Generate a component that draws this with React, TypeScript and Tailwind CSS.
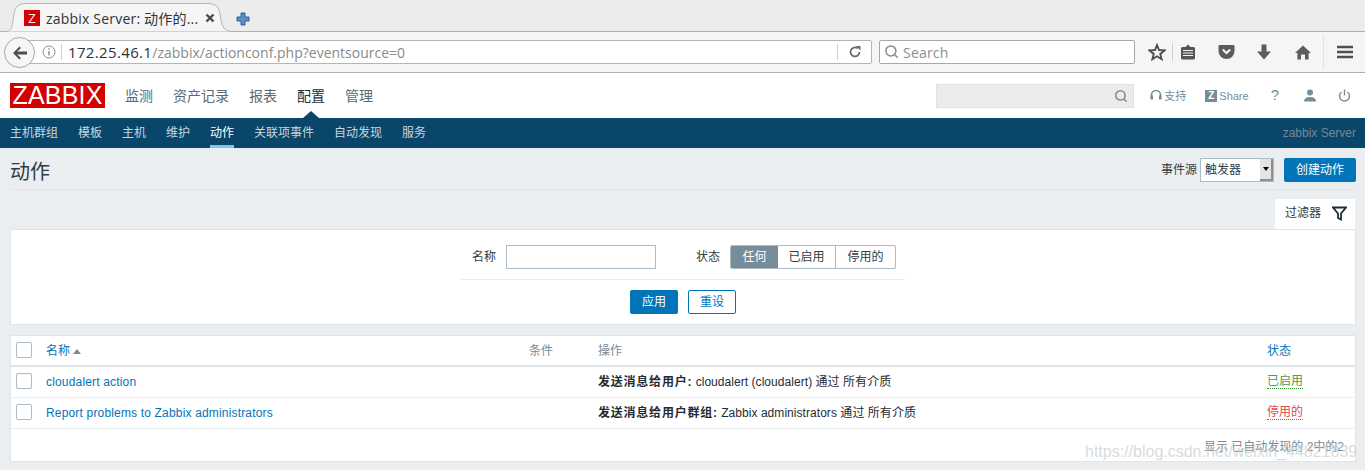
import { Search } from "lucide-react";

const uiFont = "font-['Liberation_Sans','Noto_Sans_CJK_SC',sans-serif]";
const chromeFont = "font-['Open_Sans','Noto_Sans_CJK_SC',sans-serif]";

const topMenu = ["监测", "资产记录", "报表", "配置", "管理"];
const subMenu = ["主机群组", "模板", "主机", "维护", "动作", "关联项事件", "自动发现", "服务"];

const actionRows = [
  {
    name: "cloudalert action",
    label: "发送消息给用户:",
    target: " cloudalert (cloudalert) 通过 所有介质",
    status: "已启用",
    statusClass: "text-[#4f9c4f] border-[#2f8f2f]",
  },
  {
    name: "Report problems to Zabbix administrators",
    label: "发送消息给用户群组:",
    target: " Zabbix administrators 通过 所有介质",
    status: "停用的",
    statusClass: "text-[#e0484d] border-[#e33734]",
  },
];

const TabStrip = () => {
  return (
    <div className={`relative h-[32px] bg-[#ececec] border-b border-[#b0b0b0] ${chromeFont}`}>
      <svg className="absolute left-0 top-0" width="240" height="32" viewBox="0 0 240 32">
        <path
          d="M0 31.5 H4 C12 31.5 12 28 14 14 C15 7 18 3.5 26 3.5 H208 C216 3.5 219 7 220 14 C222 28 224 31.5 234 31.5"
          fill="#f5f5f5"
          stroke="#b4b4b4"
        />
      </svg>
      <div className="absolute left-[24px] top-[10px] w-[16px] h-[16px] bg-[#d40000] flex items-center justify-center text-white text-[13px] leading-none">
        Z
      </div>
      <span className="absolute left-[46px] top-[9px] text-[14px] leading-[20px] text-[#2e3436] whitespace-nowrap tracking-[0.2px]">
        zabbix Server: 动作的...
      </span>
      <svg className="absolute left-[205px] top-[13px]" width="10" height="10" viewBox="0 0 10 10">
        <path d="M1.5 1.5 L8.5 8.5 M8.5 1.5 L1.5 8.5" stroke="#4a4a4a" strokeWidth="2.4" />
      </svg>
      <svg className="absolute left-[236px] top-[12px]" width="14" height="14" viewBox="0 0 14 14">
        <path d="M5 1 H9 V5 H13 V9 H9 V13 H5 V9 H1 V5 H5 Z" fill="#5b8fc7" stroke="#2f5f9c" />
      </svg>
    </div>
  );
};

const Toolbar = () => {
  return (
    <div className={`relative h-[41px] bg-[#f5f5f5] border-b border-[#b0b0b0] flex items-center ${chromeFont}`}>
      <div className="ml-[19px] mt-[-1px] flex-1 h-[24px] bg-white border border-[#b5b5b5] rounded-r-[2px] flex items-center pl-[22px] pr-[9px] min-w-0">
        <svg width="14" height="14" viewBox="0 0 14 14" className="shrink-0">
          <circle cx="7" cy="7" r="6" fill="none" stroke="#8c8c8c" />
          <path d="M7 6 V10.5 M7 3.2 V4.8" stroke="#8c8c8c" strokeWidth="1.4" />
        </svg>
        <div className="w-px h-[16px] bg-[#d0d0d0] ml-[5px] mr-[6px]" />
        <span className="text-[15px] text-[#2e3436] whitespace-nowrap tracking-[0.35px] pt-[1px]">
          172.25.46.1
          <span className="text-[14px] tracking-normal text-[#8a8a8a]">/zabbix/actionconf.php?eventsource=0</span>
        </span>
        <div className="ml-auto flex items-center">
          <div className="w-px h-[16px] bg-[#d0d0d0] mr-[10px]" />
          <svg width="14" height="14" viewBox="0 0 14 14">
            <path d="M11.5 7 A4.5 4.5 0 1 1 9.8 3.4" fill="none" stroke="#6a6a6a" strokeWidth="1.8" />
            <path d="M8 1 H12.5 V5.5 Z" fill="#6a6a6a" />
          </svg>
        </div>
      </div>
      <div className="ml-[7px] mt-[-1px] w-[256px] h-[24px] bg-white border border-[#a8a8a8] rounded-[2px] flex items-center pl-[4px] shrink-0">
        <Search size={15} strokeWidth={2.4} className="text-[#8a8a8a]" />
        <span className="ml-[4px] pt-[1px] text-[14px] text-[#8f8f8f] tracking-[0.2px]">Search</span>
      </div>
      <div className="w-[230px] shrink-0 flex items-center h-full">
        <svg className="ml-[13px]" width="18" height="18" viewBox="0 0 18 18">
          <path d="M9 2 L11 7 L16.5 7.4 L12.3 10.9 L13.6 16.2 L9 13.3 L4.4 16.2 L5.7 10.9 L1.5 7.4 L7 7 Z" fill="none" stroke="#4f4f4f" strokeWidth="1.9" />
        </svg>
        <div className="w-px h-[18px] bg-[#d0d0d0] ml-[6px] mr-[8px]" />
        <svg width="14" height="16" viewBox="0 0 14 16">
          <path d="M1.5 3 H4.5 L7 0.5 L9.5 3 H12.5 Q14 3 14 4.5 V14 Q14 15.5 12.5 15.5 H1.5 Q0 15.5 0 14 V4.5 Q0 3 1.5 3 Z" fill="#555" />
          <path d="M2 6.5 H12 M2 9 H12 M2 11.5 H12" stroke="#f5f5f5" />
        </svg>
        <svg className="ml-[23px]" width="17" height="16" viewBox="0 0 17 16">
          <path d="M1.5 1 H15.5 Q16.5 1 16.5 2 V7 A8 8 0 0 1 0.5 7 V2 Q0.5 1 1.5 1 Z" fill="#5c5c5c" />
          <path d="M4.8 5.5 L8.5 9 L12.2 5.5" fill="none" stroke="#f5f5f5" strokeWidth="2" />
        </svg>
        <svg className="ml-[22px]" width="14" height="16" viewBox="0 0 14 16">
          <path d="M4.5 0.5 H9.5 V7.5 H14 L7 15.5 L0 7.5 H4.5 Z" fill="#5c5c5c" />
        </svg>
        <svg className="ml-[24px]" width="16" height="15" viewBox="0 0 16 15">
          <path d="M8 0.5 L16 8 H13.6 V14.5 H10 V9.5 H6 V14.5 H2.4 V8 H0 Z" fill="#5c5c5c" />
        </svg>
        <div className="w-px h-[34px] bg-[#e2e2e2] ml-[12px] mr-[13px]" />
        <svg width="16" height="14" viewBox="0 0 16 14">
          <path d="M0 2 H16 M0 7 H16 M0 12 H16" stroke="#4f4f4f" strokeWidth="2.6" />
        </svg>
      </div>
      {/* back button sits over the start of the address bar */}
      <div className="absolute left-[4px] top-[5px] w-[31px] h-[31px] rounded-full bg-[#f6f6f6] border border-[#a8a8a8] flex items-center justify-center">
        <svg width="16" height="14" viewBox="0 0 16 14">
          <path d="M7.5 0.5 L1 7 L7.5 13.5 L9 12 L5.2 8.5 H15 V5.5 H5.2 L9 2 Z" fill="#4f4f4f" />
        </svg>
      </div>
    </div>
  );
};

const HeaderBar = () => {
  return (
    <div className="h-[45px] bg-white flex items-center pl-[10px] pr-[14px]">
      <div className="w-[95px] h-[25px] bg-[#d40000] text-white text-[25px] leading-[25px] text-center tracking-[0.2px]">
        ZABBIX
      </div>
      <div className="flex ml-[20px] gap-[20px] text-[14px] text-[#5a6a75] pt-[2px]">
        {topMenu.map((item) => (
          <span key={item} className={item === "配置" ? "relative text-[#1f2c33]" : ""}>
            {item}
          </span>
        ))}
      </div>
      <div className="ml-auto w-[198px] h-[24px] bg-[#ebebeb] border border-[#e0e0e0] flex items-center justify-end pr-[5px]">
        <Search size={14} strokeWidth={2.6} className="text-[#7d8c96]" />
      </div>
      <svg className="ml-[16px]" width="12" height="13" viewBox="0 0 12 13">
        <path d="M1.5 9 V6 A4.5 4.5 0 0 1 10.5 6 V9" fill="none" stroke="#768d99" strokeWidth="1.6" />
        <rect x="0.5" y="6.5" width="2.5" height="4" fill="#768d99" />
        <rect x="9" y="6.5" width="2.5" height="4" fill="#768d99" />
      </svg>
      <span className="ml-[2px] text-[11px] text-[#768d99] pt-[1px]">支持</span>
      <div className="ml-[19px] w-[12px] h-[12px] bg-[#768d99] text-white text-[10px] font-bold leading-[12px] text-center">
        Z
      </div>
      <span className="ml-[2px] text-[11px] text-[#768d99] pt-[1px]">Share</span>
      <span className="ml-[22px] text-[15px] text-[#768d99]">?</span>
      <svg className="ml-[24px]" width="14" height="13" viewBox="0 0 14 13">
        <circle cx="7" cy="3.5" r="3" fill="#768d99" />
        <path d="M1 12.5 Q1 8 7 8 Q13 8 13 12.5 Z" fill="#768d99" />
      </svg>
      <svg className="ml-[21px]" width="13" height="13" viewBox="0 0 13 13">
        <path d="M3.6 3 A5 5 0 1 0 9.4 3" fill="none" stroke="#768d99" strokeWidth="1.4" />
        <path d="M6.5 0.5 V6.5" stroke="#768d99" strokeWidth="1.4" />
      </svg>
    </div>
  );
};

const SubNav = () => {
  return (
    <div className="relative h-[30px] bg-[#0a466a] flex items-stretch pl-[10px] pr-[9px]">
      <div className="absolute left-[303px] top-[-7px] w-0 h-0 border-l-[8px] border-r-[8px] border-b-[7px] border-l-transparent border-r-transparent border-b-[#0a466a]" />
      <div className="flex gap-[20px] text-[12px] text-[#c6d6e0]">
        {subMenu.map((item) => (
          <span
            key={item}
            className={
              item === "动作"
                ? "flex items-center text-white border-b-[3px] border-t-[3px] border-t-transparent border-b-[#7fc4f0]"
                : "flex items-center"
            }
          >
            {item}
          </span>
        ))}
      </div>
      <span className="ml-auto self-center text-[12px] text-[#71899a]">zabbix Server</span>
    </div>
  );
};

const FilterPanel = () => {
  return (
    <>
      <div className="flex justify-end pr-[1px]">
        <div className="w-[80px] h-[30px] bg-white flex items-center pl-[10px] pb-[2px] gap-[11px] text-[12px] text-[#2f3d45]">
          <span>过滤器</span>
          <svg width="15" height="15" viewBox="0 0 15 15">
            <path d="M1 1.5 H14 L9 7.5 V13.5 L6 12 V7.5 Z" fill="none" stroke="#1f2c33" strokeWidth="1.8" />
          </svg>
        </div>
      </div>
      <div className="h-[96px] bg-white border border-[#dfe4e7] flex flex-col items-center text-[12px] text-[#2f3d45]">
        <div className="w-[444px] h-[50px] border-b border-[#ebeef0] flex items-center pl-[11px] pt-[4px]">
          <span>名称</span>
          <div className="ml-[10px] w-[150px] h-[24px] bg-white border border-[#acbbc5]" />
          <span className="ml-[40px]">状态</span>
          <div className="ml-[10px] flex h-[24px] border border-[#acbbc5] rounded-[2px] overflow-hidden">
            <div className="w-[47px] bg-[#768d99] text-white flex items-center justify-center">任何</div>
            <div className="w-[58px] border-r border-[#acbbc5] flex items-center justify-center">已启用</div>
            <div className="w-[59px] flex items-center justify-center">停用的</div>
          </div>
        </div>
        <div className="flex gap-[10px] mt-[10px]">
          <button className="w-[48px] h-[24px] bg-[#0275b8] text-white rounded-[2px]">应用</button>
          <button className="w-[48px] h-[24px] bg-white border border-[#0275b8] text-[#0275b8] rounded-[2px]">重设</button>
        </div>
      </div>
    </>
  );
};

const Checkbox = () => {
  return <div className="w-[16px] h-[16px] bg-white border border-[#acbbc5] rounded-[2px]" />;
};

const ActionsTable = () => {
  return (
    <div className="mt-[10px] bg-white border border-[#dfe4e7] text-[12px] relative">
      <div className="grid grid-cols-[30px_483px_69px_669px_1fr] h-[31px] items-center border-b-2 border-[#dfe4e7] pl-[5px] pb-[1px]">
        <Checkbox />
        <div className="flex items-center text-[#0275b8] pt-[2px]">
          名称
          <span className="ml-[3px] w-0 h-0 border-l-[4px] border-r-[4px] border-b-[5px] border-l-transparent border-r-transparent border-b-[#768d99]" />
        </div>
        <span className="text-[#768d99] pt-[2px]">条件</span>
        <span className="text-[#768d99] pt-[2px]">操作</span>
        <span className="text-[#0275b8] pt-[2px]">状态</span>
      </div>
      {actionRows.map((row) => (
        <div
          key={row.name}
          className="grid grid-cols-[30px_552px_669px_1fr] h-[31px] items-center border-b border-[#ebeef0] pl-[5px] pb-[2px]"
        >
          <Checkbox />
          <span className="text-[#0275b8] tracking-[0.17px] whitespace-nowrap pt-[1px]">{row.name}</span>
          <span className="text-[#1f2c33] whitespace-pre tracking-[0.05px] pt-[1px]">
            <b className="tracking-[0.78px]">{row.label}</b>
            {row.target}
          </span>
          <span className={`justify-self-start border-b border-dotted leading-[14px] mt-[1px] ${row.statusClass}`}>{row.status}</span>
        </div>
      ))}
      <div className="h-[32px] flex items-center justify-end pr-[11px] pt-[3px] text-[#768d99]">显示 已自动发现的 2中的2</div>
    </div>
  );
};

export default function App() {
  return (
    <div className={`relative w-[1365px] h-[470px] overflow-hidden bg-[#ebeef0] ${uiFont}`}>
      <TabStrip />
      <Toolbar />
      <HeaderBar />
      <SubNav />
      <div className="px-[9px] pl-[10px]">
        <div className="h-[42px] border-b border-[#dfe4e7] flex items-center pt-[3px] text-[12px] text-[#2f3d45]">
          <h1 className="text-[20px] text-[#2f3d45] pt-[3px]">动作</h1>
          <span className="ml-auto">事件源</span>
          <div className="ml-[3px] w-[74px] h-[24px] bg-white border border-[#acbbc5] flex items-center pl-[4px] relative">
            触发器
            <div className="absolute right-0 top-0 bottom-0 w-[13px] bg-[#e4e4e4] border-r-2 border-b-2 border-[#8f8f8f] flex items-center justify-center">
              <span className="w-0 h-0 border-l-[3px] border-r-[3px] border-t-[4px] border-l-transparent border-r-transparent border-t-black" />
            </div>
          </div>
          <button className="ml-[10px] w-[72px] h-[24px] bg-[#0275b8] text-white rounded-[2px]">创建动作</button>
        </div>
        <div className="mt-[9px]">
          <FilterPanel />
        </div>
        <ActionsTable />
      </div>
      {/* csdn watermark over the bottom right corner */}
      <span className="absolute left-[1085px] top-[441px] text-[16px] leading-[22px] text-[#c8ccce]/70 whitespace-nowrap">
        https://blog.csdn.net/weixin_44821839
      </span>
    </div>
  );
}
